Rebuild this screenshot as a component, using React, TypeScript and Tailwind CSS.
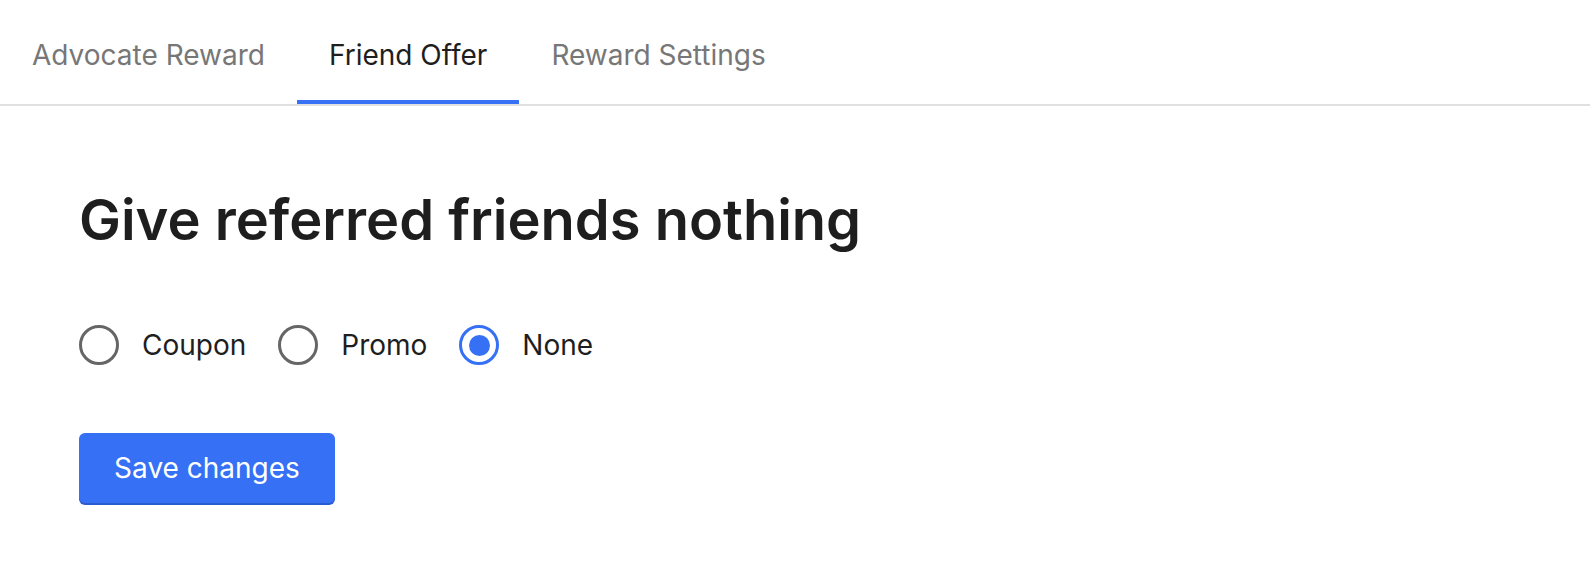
export default function App() {
  const tabs = ["Advocate Reward", "Friend Offer", "Reward Settings"];
  const active = 1;
  const options = ["Coupon", "Promo", "None"];
  const selected = 2;

  return (
    <div className="min-h-screen bg-white font-['Inter',sans-serif] text-[#1e1e1e]">
      {/* Tabs */}
      <div className="flex border-b-2 border-[#e0e0e0]">
        {tabs.map((t, i) => (
          <div
            key={t}
            className={`px-8 pt-[38px] pb-[28px] text-[28px] leading-[34px] border-b-4 ${
              i === active ? "border-[#3570f5] text-[#1e1e1e]" : "border-transparent text-[#777777]"
            }`}
          >
            {t}
          </div>
        ))}
      </div>

      <div className="px-[79px]">
        <h1 className="mt-[80px] text-[56px] leading-[68px] font-semibold text-[#1e1e1e]">
          Give referred friends nothing
        </h1>

        {/* Radios */}
        <div className="mt-[71px] flex items-center gap-[32px]">
          {options.map((o, i) => (
            <label key={o} className="flex items-center gap-[23px] text-[28px] leading-[40px]">
              {i === selected ? (
                <span className="w-[40px] h-[40px] rounded-full border-[3px] border-[#3570f5] flex items-center justify-center">
                  <span className="w-[21px] h-[21px] rounded-full bg-[#3570f5]" />
                </span>
              ) : (
                <span className="w-[40px] h-[40px] rounded-full border-[3px] border-[#666666]" />
              )}
              {o}
            </label>
          ))}
        </div>

        <button className="mt-[68px] w-[256px] h-[70px] rounded-[6px] bg-[#3570f5] text-white text-[28px] shadow-[0_2px_0_#2a5bd0]">
          Save changes
        </button>
      </div>
    </div>
  );
}
